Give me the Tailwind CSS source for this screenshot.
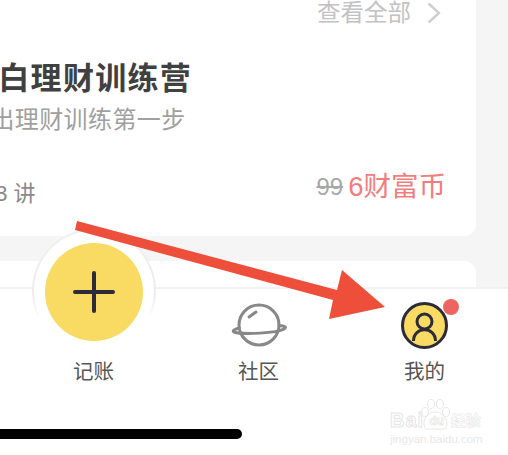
<!DOCTYPE html>
<html lang="zh">
<head>
    <meta charset="UTF-8">
    <title>我的</title>
    <script src="https://cdn.jsdelivr.net/npm/@tailwindcss/browser@4"></script>
</head>
<body class="m-0 bg-white">
    <div class="relative w-[508px] h-[455px] overflow-hidden bg-white font-['Liberation_Sans','Noto_Sans_CJK_SC',sans-serif]">
        <!-- content area -->
        <div class="h-[288px] bg-[#f5f5f5] overflow-hidden">
            <div class="ml-[-60px] w-[536px] h-[236px] bg-white rounded-br-xl relative">
                <div class="flex justify-end items-center h-[26px] pr-[35px] gap-[16px] text-[#c2c2c2] text-[23.5px] leading-[26px]">
                    <span>查看全部</span>
                    <svg width="14" height="22" viewBox="0 0 14 22" fill="none" stroke="#cfcfcf" stroke-width="2.4"><path d="M1.5 1.5 L12 11 L1.5 20.5"/></svg>
                </div>
                <div class="pl-[26px] mt-[34px] text-[31px] leading-[38px] font-bold tracking-[1.3px] text-[#404040] whitespace-nowrap">小白理财训练营</div>
                <div class="pl-[26px] mt-[6px] text-[24px] leading-[32px] tracking-[0.4px] text-[#a0a0a0] whitespace-nowrap">迈出理财训练第一步</div>
                <div class="flex justify-between items-start mt-[36px] pr-[30px] pl-[43px]">
                    <span class="text-[22px] leading-[30px] text-[#8a8a8a] mt-[7px]">13 讲</span>
                    <span class="flex items-center gap-[5px]">
                        <span class="text-[24px] leading-[30px] text-[#a8a8a8] line-through">99</span>
                        <span class="text-[27.5px] leading-[30px] text-[#f47c7c]">6财富币</span>
                    </span>
                </div>
            </div>
            <div class="ml-[-60px] mt-[25px] w-[536px] h-[40px] bg-white rounded-t-xl"></div>
        </div>

        <!-- tab bar -->
        <div class="relative h-[167px] border-t-2 border-[#f2f2f2] mt-[-1px] pl-[11px]">
            <div class="grid grid-cols-[165px_165px_167px]">
                <div class="flex flex-col items-center">
                    <div class="relative mt-[-59px] w-[124px] h-[124px] rounded-full bg-white flex items-center justify-center">
                        <svg class="absolute left-0 top-0" width="124" height="124" viewBox="0 0 124 124" fill="none">
                            <defs>
                                <linearGradient id="ringFade" x1="0" y1="0" x2="0" y2="88" gradientUnits="userSpaceOnUse">
                                    <stop offset="0" stop-color="#f0f0f0"/>
                                    <stop offset="0.75" stop-color="#ececec"/>
                                    <stop offset="1" stop-color="#ffffff"/>
                                </linearGradient>
                            </defs>
                            <path d="M7.5 88 A61 61 0 1 1 116.5 88" stroke="url(#ringFade)" stroke-width="2"/>
                        </svg>
                        <div class="relative w-[98px] h-[98px] rounded-full bg-[#f9db63] flex items-center justify-center">
                            <svg width="44" height="44" viewBox="0 0 44 44" stroke="#2b2b3a" stroke-width="4" stroke-linecap="round"><path d="M22 3 V41 M3 22 H41"/></svg>
                        </div>
                    </div>
                    <span class="mt-[6px] text-[20.5px] leading-[24px] text-[#555]">记账</span>
                </div>
                <div class="flex flex-col items-center">
                    <svg class="mt-[14px]" width="56" height="44" viewBox="0 0 56 44" fill="none" stroke="#888" stroke-width="3" stroke-linecap="round"><circle cx="28" cy="22" r="20"/><path d="M18 14 L25 9"/><path d="M8 25 C3 26.5 1 28 3 29 C12 32 46 30 53 26 C56 24 54 23 48 22.5"/></svg>
                    <span class="mt-[13px] text-[20.5px] leading-[24px] text-[#555]">社区</span>
                </div>
                <div class="flex flex-col items-center">
                    <div class="relative mt-[13px] w-[47px] h-[47px]">
                        <svg width="47" height="47" viewBox="0 0 47 47"><circle cx="23.5" cy="23.5" r="22" fill="#f9db63" stroke="#2b2b3a" stroke-width="3"/><circle cx="23.5" cy="19.5" r="7.5" fill="none" stroke="#2b2b3a" stroke-width="3"/><path d="M12.5 39 C12.5 24 34.5 24 34.5 39" fill="none" stroke="#2b2b3a" stroke-width="3"/></svg>
                        <span class="absolute right-[-11px] top-[-3px] w-[16px] h-[16px] rounded-full bg-[#ee6463]"></span>
                    </div>
                    <span class="mt-[11px] text-[20.5px] leading-[24px] text-[#555]">我的</span>
                </div>
            </div>
            <div class="absolute left-0 top-[140px] w-[242px] h-[10px] rounded-r-full bg-black"></div>
        </div>

        <!-- annotation arrow -->
        <svg class="absolute left-0 top-0 pointer-events-none" width="508" height="455" fill="none">
            <path d="M77 221 L337 290 L342 270 L385 307 L329 319 L333 300 L75 230 Z" fill="#ed4f3b"/>
        </svg>

        <!-- watermark -->
        <div class="absolute left-[390px] top-[400px] w-[92px]">
            <svg class="absolute left-[30px] top-[-2px]" width="30" height="34" viewBox="0 0 30 34" fill="none" stroke="#e8e8e8"><ellipse cx="5" cy="14" rx="3.5" ry="4.5"/><ellipse cx="11" cy="6" rx="3.5" ry="4.5"/><ellipse cx="20" cy="6" rx="3.5" ry="4.5"/><ellipse cx="26" cy="14" rx="3.5" ry="4.5"/><path d="M4 26 C4 18 10 14 15 14 C21 14 27 19 27 26 C27 33 20 31 15 31 C10 31 4 33 4 26 Z"/></svg>
            <div class="flex items-end h-[30px] font-bold leading-none">
                <span class="text-[20px] text-transparent [-webkit-text-stroke:1px_#e6e6e6] tracking-[1px]">Bai</span>
                <span class="text-[12px] ml-[5px] mb-[3px] text-transparent [-webkit-text-stroke:0.6px_#e0e0e0]">du</span>
                <span class="text-[15px] ml-[7px] mb-[2px] text-transparent [-webkit-text-stroke:0.5px_#e6e6e6]">经验</span>
            </div>
            <div class="text-[11.5px] leading-[13px] mt-[3px] whitespace-nowrap text-[#e8e8e8]">jingyan.baidu.com</div>
        </div>
    </div>
</body>
</html>
